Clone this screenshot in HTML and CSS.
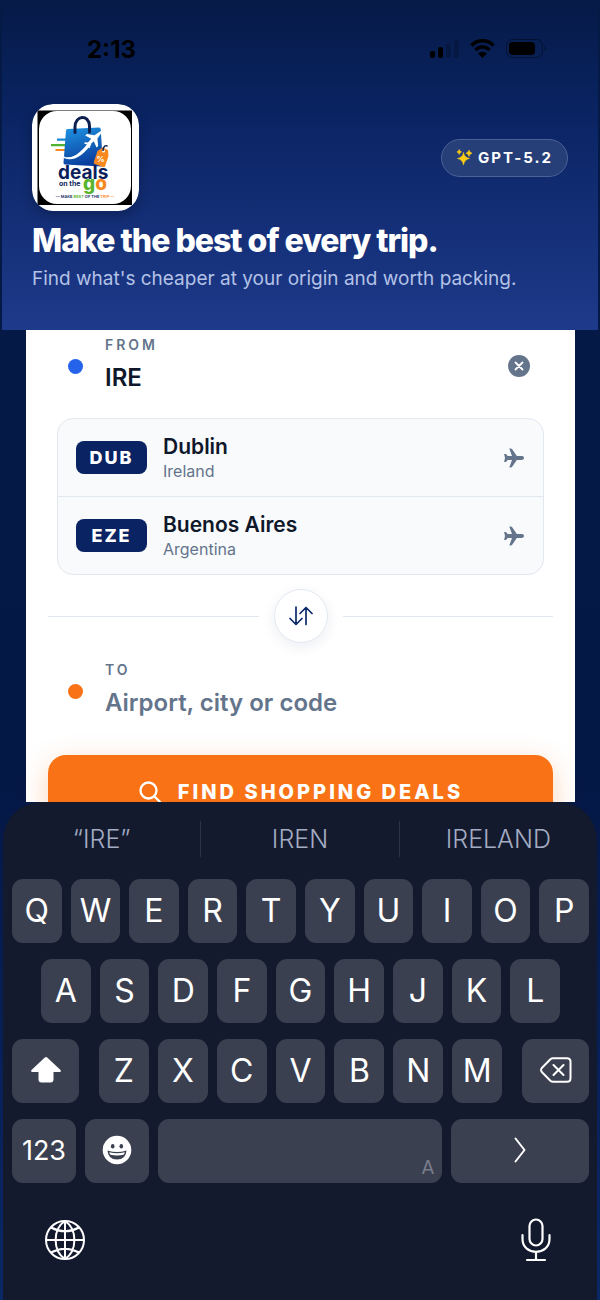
FILE: index.html
```html
<!DOCTYPE html>
<html lang="en">
<head>
  <meta charset="UTF-8">
  <meta name="viewport" content="width=device-width, initial-scale=1">
  <title>Deals on the Go</title>
  <link rel="stylesheet" href="styles.css">
</head>
<body>

  <header class="hero">
    <div class="status">
      <span class="time">2:13</span>
      <svg class="status-icons" width="118" height="24" viewBox="0 0 118 24" aria-hidden="true">
        <rect x="1" y="14" width="5" height="7" rx="2"/>
        <rect x="9" y="10" width="5" height="11" rx="2"/>
        <rect x="17" y="6" width="5" height="15" rx="2" opacity=".2"/>
        <rect x="25" y="3" width="5" height="18" rx="2" opacity=".2"/>
        <path d="M42.5 8.500a15 15 0 0 1 22 0M46.500 13a9.500 9.500 0 0 1 14 0" fill="none" stroke="#000" stroke-width="3.400"/>
        <path d="M49 16.500a6.500 6.500 0 0 1 9 0L53.500 21z"/>
        <rect x="77.500" y="2.500" width="36" height="18" rx="6" fill="none" stroke="#000" opacity=".4"/>
        <rect x="80" y="5" width="26" height="13" rx="4"/>
        <path d="M115.500 9v5q3-2.500 0-5z" opacity=".4"/>
      </svg>
    </div>

    <div class="brand-row">
      <svg class="logo" width="107" height="107" viewBox="0 0 107 107" role="img" aria-label="Deals on the Go">
        <defs>
          <linearGradient id="bag" x1="0" y1="0" x2="0.300" y2="1">
            <stop offset="0" stop-color="#1f95e4"/>
            <stop offset="1" stop-color="#0b3f9e"/>
          </linearGradient>
        </defs>
        <rect width="107" height="107" rx="21" fill="#fff"/>
        <rect x="5.500" y="6.500" width="94.500" height="94.500" fill="#000"/>
        <rect x="7" y="7" width="92" height="93" rx="18" fill="#fff"/>
        <path d="M25 35.700h10" stroke="#1687d9" stroke-width="2.200"/>
        <path d="M19 41.200h15" stroke="#4fb233" stroke-width="2.200"/>
        <path d="M23.500 46h10" stroke="#f78c1f" stroke-width="2.200"/>
        <path d="M35.500 25 67 23.500q1.500 0 1.700 1.500L71 61q0 1.500-1.500 1.500L33 60.500q-1.700 0-1.500-1.700L34 26.500q0-1.500 1.500-1.500z" fill="url(#bag)"/>
        <path d="M43 28.500V23c0-12 14-13 14.500-1v6" fill="none" stroke="#0c1f4f" stroke-width="3" stroke-linecap="round"/>
        <path d="M32 52.500c9 3.500 17-4.500 25-14.500l2.500 2c-8 11-18 18.500-27.500 14z" fill="#fff"/>
        <path d="m68 27.500-5.500 3.800-7.500-1.300-1.800 1.500 6 3.300-3.200 3.600-3-.2-1 1.200 3.500 1.400 1.500 3.500 1.200-1 .2-3 3.400-3 2.700 6.300 1.700-1.600-.8-7.500 3.800-5.300c.7-1-.2-2.300-1.200-1.700z" fill="#fff"/>
        <path d="m65.500 47 5-3.500 5.500 2.500.5 6-3.300 10q-.7 1.700-2.300 1l-8-3q-1.700-.7-1-2.300z" fill="#f9891f"/>
        <circle cx="71.500" cy="47" r="1.500" fill="#fff"/>
        <path d="M71 47c0-5 3-6.500 4.500-4.500" fill="none" stroke="#0c1f4f" stroke-width="1.400"/>
        <text class="logo-percent" x="68.500" y="58" text-anchor="middle">%</text>
        <text class="logo-deals" x="26" y="75">deals</text>
        <text class="logo-small" x="27" y="82">on the</text>
        <text class="logo-go" x="51" y="86"><tspan fill="#57b52d">g</tspan><tspan fill="#f9891f">o</tspan></text>
        <text class="logo-tag" x="53" y="94" text-anchor="middle">— MAKE <tspan fill="#57b52d">BEST</tspan> OF THE <tspan fill="#f9891f">TRIP —</tspan></text>
      </svg>
      <span class="model">
        <svg width="17" height="17" viewBox="0 0 17 17" aria-hidden="true">
          <path d="M7.500 3.500q.8 5 6 6-5.200 1-6 6.500-.8-5.500-6-6.500 5.200-1 6-6zM13 1q.4 2.600 3 3.200-2.600.6-3 3.200-.4-2.600-3-3.200 2.600-.6 3-3.200zM3.200.5q.3 2 2.300 2.400-2 .5-2.300 2.500Q2.900 3.400.9 2.900 2.900 2.500 3.200.5z" fill="#facc15" stroke="#facc15" stroke-width=".6" stroke-linejoin="round"/>
        </svg>
        GPT-5.2
      </span>
    </div>

    <h1>Make the best of every trip.</h1>
    <p>Find what's cheaper at your origin and worth packing.</p>
  </header>

  <main>
    <form class="search">
      <div class="field">
        <span class="dot"></span>
        <div class="field-text">
          <label for="from">FROM</label>
          <input type="text" id="from" value="IRE">
        </div>
        <button type="button" class="clear" aria-label="Clear origin">
          <svg width="22" height="22" viewBox="0 0 22 22">
            <circle cx="11" cy="11" r="11" fill="#64748b"/>
            <path d="m7.500 7.500 7 7m0-7-7 7" stroke="#fff" stroke-width="1.800" stroke-linecap="round"/>
          </svg>
        </button>
      </div>

      <ul class="airports">
        <li>
          <button type="button" class="airport">
            <span class="code">DUB</span>
            <span class="place"><strong>Dublin</strong><small>Ireland</small></span>
            <svg width="22" height="20" viewBox="0 0 22 20" aria-hidden="true"><path class="plane" d="M21 10c0-1.300-1.300-1.900-2.500-1.900h-4.700L9.200 1.200q-.5-.7-1.400-.7H6.300L9 8.100H4.700L3 6H1.100l.9 4-.9 4H3l1.700-2.100H9l-2.700 7.600h1.500q.9 0 1.400-.7l4.600-6.900h4.700c1.200 0 2.500-.6 2.500-1.900z"/></svg>
          </button>
        </li>
        <li>
          <button type="button" class="airport">
            <span class="code">EZE</span>
            <span class="place"><strong>Buenos Aires</strong><small>Argentina</small></span>
            <svg width="22" height="20" viewBox="0 0 22 20" aria-hidden="true"><path class="plane" d="M21 10c0-1.300-1.300-1.900-2.500-1.900h-4.700L9.200 1.200q-.5-.7-1.400-.7H6.300L9 8.100H4.700L3 6H1.100l.9 4-.9 4H3l1.700-2.100H9l-2.700 7.600h1.500q.9 0 1.400-.7l4.600-6.900h4.700c1.200 0 2.500-.6 2.500-1.900z"/></svg>
          </button>
        </li>
      </ul>

      <div class="swap-row">
        <button type="button" class="swap" aria-label="Swap origin and destination">
          <svg width="24" height="20" viewBox="0 0 24 20"><path d="M7 1v17M1 12.500l6 6 6-6M17 18.500V1.500M11 7.500l6-6 6 6" fill="none" stroke="#0b2a6b" stroke-width="1.700" stroke-linecap="round" stroke-linejoin="round"/></svg>
        </button>
      </div>

      <div class="field field-to">
        <span class="dot"></span>
        <div class="field-text">
          <label for="to">TO</label>
          <input type="text" id="to" placeholder="Airport, city or code">
        </div>
      </div>

      <button type="submit" class="find">
        <svg width="24" height="24" viewBox="0 0 24 24" aria-hidden="true"><path d="M18.500 10.500a8 8 0 1 1-16 0 8 8 0 0 1 16 0zM16.300 16.300l6 6" fill="none" stroke="#fff" stroke-width="2.300" stroke-linecap="round"/></svg>
        FIND SHOPPING DEALS
      </button>
    </form>
  </main>

  <section class="keyboard" aria-label="Keyboard">
    <div class="suggestions">
      <button type="button">“IRE”</button>
      <button type="button">IREN</button>
      <button type="button">IRELAND</button>
    </div>

    <div class="keys">
      <div class="key-row">
        <button type="button">Q</button>
        <button type="button">W</button>
        <button type="button">E</button>
        <button type="button">R</button>
        <button type="button">T</button>
        <button type="button">Y</button>
        <button type="button">U</button>
        <button type="button">I</button>
        <button type="button">O</button>
        <button type="button">P</button>
      </div>
      <div class="key-row key-row-inset">
        <button type="button">A</button>
        <button type="button">S</button>
        <button type="button">D</button>
        <button type="button">F</button>
        <button type="button">G</button>
        <button type="button">H</button>
        <button type="button">J</button>
        <button type="button">K</button>
        <button type="button">L</button>
      </div>
      <div class="key-row key-row-shift">
        <button type="button" aria-label="Shift">
          <svg width="32" height="28" viewBox="0 0 32 28"><path d="M14.800 1.500q1.200-1 2.400 0L30.500 14q1.200 1.800-1 2H23.500v7.500q0 3-3 3h-9q-3 0-3-3V16H2.500q-2.200-.2-1-2z" fill="#fff"/></svg>
        </button>
        <div class="letters">
          <button type="button">Z</button>
          <button type="button">X</button>
          <button type="button">C</button>
          <button type="button">V</button>
          <button type="button">B</button>
          <button type="button">N</button>
          <button type="button">M</button>
        </div>
        <button type="button" aria-label="Delete">
          <svg width="32" height="26" viewBox="0 0 32 26"><path d="M13 1.200h14q3.500 0 3.500 3.500v16.600q0 3.500-3.500 3.500H13q-1.500 0-2.600-1L1.800 15q-1.500-2 0-4l8.600-8.800q1.100-1 2.600-1zM13.500 8l10 10m0-10-10 10" fill="none" stroke="#fff" stroke-width="2" stroke-linecap="round" stroke-linejoin="round"/></svg>
        </button>
      </div>
      <div class="key-row key-row-space">
        <button type="button" class="numbers">123</button>
        <button type="button" aria-label="Emoji">
          <svg width="30" height="30" viewBox="0 0 30 30">
            <circle cx="15" cy="15" r="14.300" fill="#fff"/>
            <ellipse cx="10.700" cy="11.300" rx="1.800" ry="2.300" fill="#3b4050"/>
            <ellipse cx="19.300" cy="11.300" rx="1.800" ry="2.300" fill="#3b4050"/>
            <path d="M5.500 15.500q9.500 3 19 0-.5 9-9.500 9t-9.500-9z" fill="#3b4050"/>
            <path d="M7.200 17.200q7.800 2 15.600 0-.3 1.800-1.300 2.600-6.500 1.500-13 0-1-.8-1.300-2.600z" fill="#fff"/>
          </svg>
        </button>
        <button type="button" class="space" aria-label="Space"><span>A</span></button>
        <button type="button" aria-label="Go">
          <svg width="12" height="26" viewBox="0 0 12 26"><path d="m1.500 1.500 9 11.500-9 11.500" fill="none" stroke="#fff" stroke-width="2" stroke-linecap="round" stroke-linejoin="round"/></svg>
        </button>
      </div>
    </div>

    <div class="tools">
      <button type="button" aria-label="Next keyboard">
        <svg width="42" height="42" viewBox="0 0 42 42"><path d="M40 21a19 19 0 1 1-38 0 19 19 0 0 1 38 0zM21 2v38M2 21h38M21 2c-12.500 8-12.500 30 0 38M21 2c12.500 8 12.500 30 0 38M7 8.500q14 7.500 28 0M7 33.500q14-7.500 28 0" fill="none" stroke="#fff" stroke-width="2"/></svg>
      </button>
      <button type="button" aria-label="Dictate">
        <svg width="30" height="44" viewBox="0 0 30 44"><path d="M15 1.500a6.500 6.500 0 0 1 6.500 6.500v13a6.500 6.500 0 0 1-13 0V8A6.500 6.500 0 0 1 15 1.500zM1.500 17v4c0 17 27 17 27 0v-4M15 34v8M6 42h18" fill="none" stroke="#fff" stroke-width="2.200" stroke-linecap="round"/></svg>
      </button>
    </div>
  </section>

</body>
</html>
```
FILE: styles.css
```css
* { box-sizing: border-box; }
body {
  display: flex;
  flex-direction: column;
  height: 100vh;
  margin: 0;
  background: linear-gradient(#051a45, #041846 60%, #0a2766);
  font-family: Inter, "Liberation Sans", sans-serif;
  color: #0f172a;
}
button, input { font: inherit; color: inherit; border: 0; padding: 0; background: none; }
button { cursor: pointer; }
svg { display: block; flex: none; }

/* header */
.hero {
  margin: 0 2px;
  padding: 37px 30px 38px;
  background: linear-gradient(#061a47, #0a2463 35%, #1e3a8a);
  color: #fff;
}
.status { display: flex; justify-content: space-between; align-items: center; height: 24px; padding: 0 21px 0 55px; color: #000; }
.time { font-size: 24px; font-weight: 700; }
.brand-row { display: flex; justify-content: space-between; align-items: center; margin-top: 43px; }
.logo { border-radius: 21px; box-shadow: 0 4px 12px rgba(0, 0, 0, .25); }
.logo-deals { font: 700 19px Inter, sans-serif; fill: #0c1f5c; }
.logo-go { font: 800 19px Inter, sans-serif; }
.logo-small { font: 700 7px Inter, sans-serif; fill: #0c1f5c; }
.logo-percent { font: 700 8px Inter, sans-serif; fill: #fff; }
.logo-tag { font: 600 4px Inter, sans-serif; fill: #0c1f5c; }
.model {
  display: flex;
  align-items: center;
  gap: 5px;
  height: 38px;
  padding: 0 14px;
  border: 1px solid #4a6298;
  border-radius: 19px;
  background: #263f78;
  font-size: 15px;
  font-weight: 700;
  letter-spacing: 2px;
}
h1 { margin: 10px 0 0; font-size: 32px; line-height: 40px; font-weight: 800; letter-spacing: -1px; }
.hero p { margin: 5px 0 0; font-size: 19px; line-height: 26px; color: #b3c2e6; }

/* search card */
main { flex: 1; min-height: 0; padding: 0 25px 0 26px; overflow: hidden; }
.search { padding: 6px 22px; background: #fff; }
.field { display: flex; align-items: center; height: 60px; padding: 0 23px 0 20px; }
.dot { width: 15px; height: 15px; margin-right: 22px; border-radius: 50%; background: #2563eb; }
.field-to .dot { background: #f97316; }
.field-text { flex: 1; display: flex; flex-direction: column; min-width: 0; padding-bottom: 4px; }
.field-text label { font-size: 14px; line-height: 18px; font-weight: 600; letter-spacing: 3px; color: #64748b; }
.field-text input { width: 100%; height: 30px; margin-top: 8px; font-size: 24px; font-weight: 600; outline: 0; }
.field-text input::placeholder { color: #64748b; opacity: 1; }

.airports { margin: 22px 9px 0; padding: 0; border: 1px solid #e2e8f0; border-radius: 16px; background: #f8fafc; list-style: none; }
.airports li + li { border-top: 1px solid #e2e8f0; }
.airport { display: flex; align-items: center; gap: 16px; width: 100%; height: 77px; padding: 0 18px; text-align: left; }
.code { width: 71px; border-radius: 8px; background: #0a2463; color: #fff; font-size: 18px; line-height: 33px; font-weight: 800; letter-spacing: 2px; text-align: center; }
.place { flex: 1; }
.place strong, .place small { display: block; }
.place strong { font-size: 21px; line-height: 26px; font-weight: 600; }
.place small { font-size: 16px; line-height: 22px; color: #64748b; }
.plane { fill: #64748b; }

.swap-row { display: flex; align-items: center; gap: 15px; margin-top: 14px; }
.swap-row::before, .swap-row::after { content: ""; flex: 1; height: 1px; background: #e2e8f0; }
.swap { display: grid; place-items: center; width: 54px; height: 54px; border: 1px solid #e2e8f0; border-radius: 50%; box-shadow: 0 4px 14px rgba(10, 36, 99, .08); }
.field-to { margin-top: 18px; }
.find {
  display: flex;
  justify-content: center;
  align-items: center;
  gap: 16px;
  width: 100%;
  height: 74px;
  margin-top: 34px;
  border-radius: 18px;
  background: #f97316;
  box-shadow: 0 8px 28px rgba(249, 115, 22, .3);
  color: #fff;
  font-size: 20px;
  font-weight: 800;
  letter-spacing: 3px;
}

/* keyboard */
.keyboard { height: 498px; margin: 0 3px; border-radius: 38px 38px 0 0; background: #131a2e; color: #fff; }
.suggestions { display: flex; align-items: center; height: 77px; padding-bottom: 3px; }
.suggestions button { flex: 1; height: 36px; font-size: 25px; font-weight: 300; color: #a3acc2; }
.suggestions button + button { border-left: 1px solid #2c3347; }
.keys { display: grid; gap: 16px; padding: 0 8px 0 9px; }
.key-row { display: flex; gap: 9px; }
.key-row-inset { padding: 0 29px; }
.key-row button { display: flex; flex: 1; justify-content: center; align-items: center; height: 64px; padding-bottom: 2px; border-radius: 11px; background: #3b4050; font-size: 32px; font-weight: 400; }
.key-row-shift { display: grid; grid-template-columns: 67fr 403fr 67fr; gap: 20px; }
.letters { display: flex; gap: 9px; }
.key-row-space { display: grid; grid-template-columns: 64fr 64fr 284fr 138fr; }
.key-row .numbers { font-size: 27px; }
.key-row .space { justify-content: flex-end; align-items: flex-end; padding: 0 8px 4px; color: #787d8b; font: 20px "Liberation Sans Narrow", "DejaVu Sans Condensed", sans-serif; }
.tools { display: flex; justify-content: space-between; align-items: center; padding: 35px 46px 0 41px; }
```
